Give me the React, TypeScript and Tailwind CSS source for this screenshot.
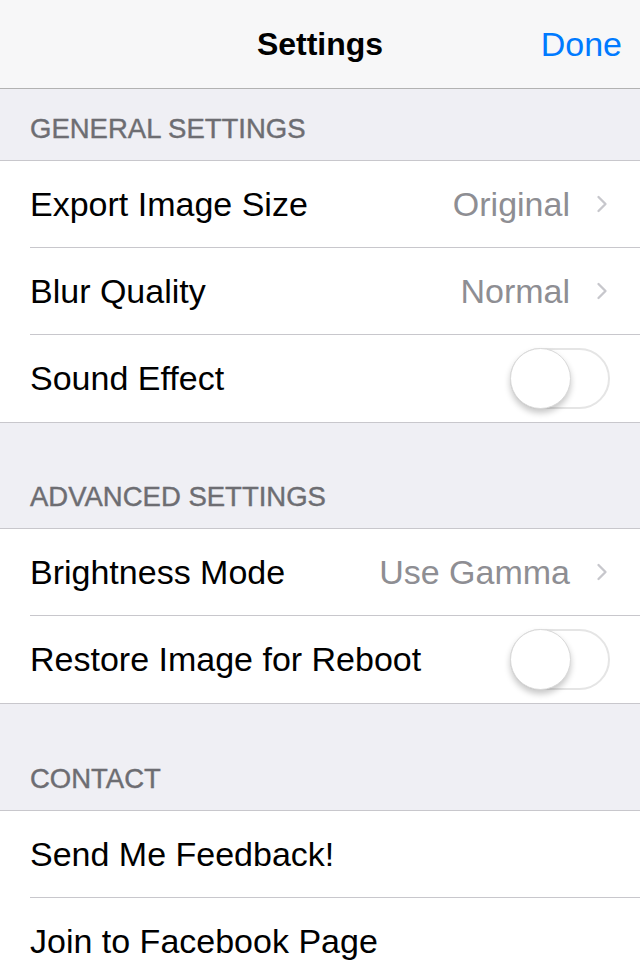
import { ChevronRight } from 'lucide-react';

type Row = { label: string; value?: string; toggle?: boolean; chevron?: boolean };

const sections: { title: string; headerH: string; rows: Row[] }[] = [
  {
    title: 'GENERAL SETTINGS',
    headerH: 'h-[71px]',
    rows: [
      { label: 'Export Image Size', value: 'Original', chevron: true },
      { label: 'Blur Quality', value: 'Normal', chevron: true },
      { label: 'Sound Effect', toggle: true },
    ],
  },
  {
    title: 'ADVANCED SETTINGS',
    headerH: 'h-[105px]',
    rows: [
      { label: 'Brightness Mode', value: 'Use Gamma', chevron: true },
      { label: 'Restore Image for Reboot', toggle: true },
    ],
  },
  {
    title: 'CONTACT',
    headerH: 'h-[106px]',
    rows: [{ label: 'Send Me Feedback!' }, { label: 'Join to Facebook Page' }],
  },
];

const Toggle = () => (
  <div className="relative w-[100px] h-[61px] rounded-full border-2 border-[#e5e5e5] bg-white">
    <div className="absolute -left-[2px] -top-[2px] w-[61px] h-[61px] rounded-full bg-white border border-[#d9d9d9] shadow-[0_4px_6px_rgba(0,0,0,0.22)]" />
  </div>
);

export default function App() {
  return (
    <div
      className="w-[640px] h-[960px] overflow-hidden bg-[#efeff4]"
      style={{ fontFamily: '"Liberation Sans", Arial, sans-serif' }}
    >
      <header className="relative h-[89px] bg-[#f7f7f8] border-b border-[#b2b2b2] flex items-center justify-center">
        <span className="text-[32px] font-bold text-black">Settings</span>
        <span className="absolute right-[18px] text-[34px] text-[#007aff]">Done</span>
      </header>

      {sections.map((s) => (
        <section key={s.title}>
          <div className={`${s.headerH} flex items-end pb-[11px] px-[30px]`}>
            <span className="text-[27.5px] text-[#6d6d72] [-webkit-text-stroke:0.4px_#6d6d72]">{s.title}</span>
          </div>
          <div className="bg-white border-t border-b border-[#c8c7cc]">
            {s.rows.map((r, i) => (
              <div key={r.label} className="pl-[30px]">
                <div
                  className={`h-[87px] flex items-center pr-[30px] ${
                    i < s.rows.length - 1 ? 'border-b border-[#c8c7cc]' : ''
                  }`}
                >
                  <span className="flex-1 text-[34px] text-black">{r.label}</span>
                  {r.value && <span className="text-[34px] text-[#8e8e93]">{r.value}</span>}
                  {r.chevron && (
                    <ChevronRight className="ml-[18px] -mr-[6px] w-[28px] h-[28px] text-[#c7c7cc]" strokeWidth={2} />
                  )}
                  {r.toggle && <Toggle />}
                </div>
              </div>
            ))}
          </div>
        </section>
      ))}
    </div>
  );
}
